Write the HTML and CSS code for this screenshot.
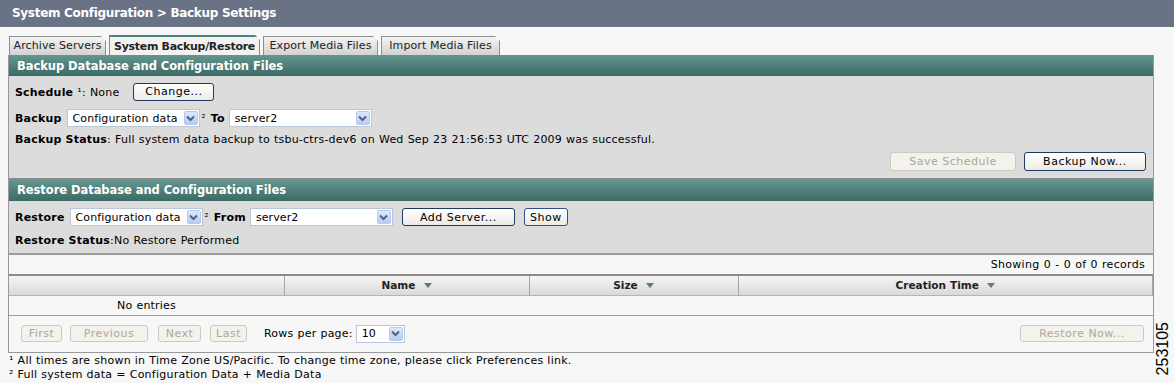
FILE: index.html
```html
<!DOCTYPE html>
<html>
<head>
<meta charset="utf-8">
<link rel="stylesheet" href="styles.css">
</head>
<body>
<header class="titlebar">System Configuration &gt; Backup Settings</header>
<div class="main">
  <div class="content">
    <nav class="tabs">
      <div class="tab t1">Archive Servers</div>
      <div class="tab active t2">System Backup/Restore</div>
      <div class="tab t3">Export Media Files</div>
      <div class="tab t4">Import Media Files</div>
    </nav>
    <section class="panel">
      <h2 class="sect-head">Backup Database and Configuration Files</h2>
      <div class="sect-body backup">
        <div class="row">
          <b>Schedule</b><span class="sup-gap">¹: None</span>
          <button class="btn change">Change...</button>
        </div>
        <div class="row">
          <b>Backup</b>
          <div class="sel sel-type"><span>Configuration data</span><i class="arrow"><svg width="9" height="7" viewBox="0 0 9 7"><path d="M1 1.5 L4.5 5 L8 1.5" fill="none" stroke="#4d6185" stroke-width="2"/></svg></i></div>
          <span class="sup">²</span><b class="lbl-to">To</b>
          <div class="sel sel-server"><span>server2</span><i class="arrow"><svg width="9" height="7" viewBox="0 0 9 7"><path d="M1 1.5 L4.5 5 L8 1.5" fill="none" stroke="#4d6185" stroke-width="2"/></svg></i></div>
        </div>
        <div class="row status"><b>Backup Status</b>: Full system data backup to tsbu-ctrs-dev6 on Wed Sep 23 21:56:53 UTC 2009 was successful.</div>
        <div class="row actions">
          <button class="btn disabled save">Save Schedule</button>
          <button class="btn backupnow">Backup Now...</button>
        </div>
      </div>
      <h2 class="sect-head second">Restore Database and Configuration Files</h2>
      <div class="sect-body restore">
        <div class="row">
          <b>Restore</b>
          <div class="sel sel-type"><span>Configuration data</span><i class="arrow"><svg width="9" height="7" viewBox="0 0 9 7"><path d="M1 1.5 L4.5 5 L8 1.5" fill="none" stroke="#4d6185" stroke-width="2"/></svg></i></div>
          <span class="sup">²</span><b class="lbl-to">From</b>
          <div class="sel sel-server"><span>server2</span><i class="arrow"><svg width="9" height="7" viewBox="0 0 9 7"><path d="M1 1.5 L4.5 5 L8 1.5" fill="none" stroke="#4d6185" stroke-width="2"/></svg></i></div>
          <button class="btn addserver">Add Server...</button>
          <button class="btn show">Show</button>
        </div>
        <div class="row status"><b>Restore Status</b>:No Restore Performed</div>
      </div>
      <div class="records">Showing 0 - 0 of 0 records</div>
      <table class="grid">
        <thead>
          <tr>
            <th class="c0"></th>
            <th class="c1">Name <svg class="tri" width="8" height="5" viewBox="0 0 8 5"><path d="M0 0 H8 L4 5 Z" fill="#5b7c7a"/></svg></th>
            <th class="c2">Size <svg class="tri" width="8" height="5" viewBox="0 0 8 5"><path d="M0 0 H8 L4 5 Z" fill="#5b7c7a"/></svg></th>
            <th class="c3">Creation Time <svg class="tri" width="8" height="5" viewBox="0 0 8 5"><path d="M0 0 H8 L4 5 Z" fill="#5b7c7a"/></svg></th>
          </tr>
        </thead>
        <tbody>
          <tr><td class="empty">No entries</td><td></td><td></td><td></td></tr>
        </tbody>
      </table>
      <div class="pager">
        <button class="btn disabled first">First</button>
        <button class="btn disabled prev">Previous</button>
        <button class="btn disabled next">Next</button>
        <button class="btn disabled last">Last</button>
        <span class="rpp">Rows per page:</span>
        <div class="sel sel-rows"><span>10</span><i class="arrow"><svg width="9" height="7" viewBox="0 0 9 7"><path d="M1 1.5 L4.5 5 L8 1.5" fill="none" stroke="#4d6185" stroke-width="2"/></svg></i></div>
        <button class="btn disabled restorenow">Restore Now...</button>
      </div>
    </section>
    <div class="notes">
      <div>¹ All times are shown in Time Zone US/Pacific. To change time zone, please click Preferences link.</div>
      <div>² Full system data = Configuration Data + Media Data</div>
    </div>
  </div>
  <div class="figno">253105</div>
</div>
</body>
</html>
```
FILE: styles.css
```css
* { box-sizing: border-box; }
html, body { margin: 0; padding: 0; }
body {
  background: #f7f7f7;
  font-family: "DejaVu Sans", Verdana, sans-serif;
  font-size: 11px;
  letter-spacing: 0.2px;
  word-spacing: 0.4px;
  color: #000;
  width: 1174px;
  height: 383px;
  overflow: hidden;
}
.titlebar {
  height: 27px;
  background: #6a7386;
  color: #fff;
  font-weight: bold;
  font-size: 12px;
  line-height: 27px;
  padding-left: 12px;
  letter-spacing: -0.3px;
  word-spacing: 0;
}
.main { display: flex; }
.content { width: 1154px; padding-left: 8px; }
.tabs {
  display: flex;
  gap: 3px;
  padding-left: 1px;
  margin-top: 8px;
  height: 20px;
  align-items: flex-end;
}
.tab {
  height: 19px;
  border: 1px solid #8e8e8e;
  border-bottom: none;
  background: linear-gradient(#f4f4f4, #d2d2d2);
  line-height: 17px;
  text-align: center;
  color: #222;
  font-size: 11px;
  letter-spacing: 0.1px;
  word-spacing: 0;
  clip-path: polygon(0 0, calc(100% - 5px) 0, 100% 5px, 100% 100%, 0 100%);
}
.tab.active {
  background: #f2f2f2;
  border-top: 2px solid #4f827d;
  border-color: #4f827d #888 #888 #888;
  font-weight: bold;
  line-height: 20px;
  height: 20px;
  letter-spacing: -0.3px;
}
.t1 { width: 97px; }
.t2 { width: 151px; }
.t3 { width: 115px; }
.t4 { width: 119px; }

.panel {
  border-left: 1px solid #999;
  border-right: 1px solid #999;
  border-bottom: 1px solid #999;
  background: #f7f7f7;
}
.sect-head {
  margin: 0;
  height: 21px;
  line-height: 22px;
  background: linear-gradient(#64968f, #3c6a64);
  color: #fff;
  font-size: 11.5px;
  font-weight: bold;
  padding-left: 8px;
  letter-spacing: -0.05px;
  word-spacing: 0;
}
.sect-head.second { border-top: 2px solid #8a8a8a; height: 23px; line-height: 21px; }
.sect-body {
  background: #dcdcdc;
  padding: 7px 6px 7px 6px;
  display: flex;
  flex-direction: column;
}
.sect-body .row { display: flex; align-items: center; height: 18px; white-space: pre; }
.sect-body .row + .row { margin-top: 8px; }
.sect-body .row.status { height: 13px; margin-top: 6px; }
.sect-body .row.actions { justify-content: flex-end; height: 19px; margin-top: 6px; padding-right: 1px; }
.backup .row:first-child { padding-top: 1px; }
.restore { padding-bottom: 6px; border-bottom: 2px solid #9a9a9a; }
.restore .row.status { margin-top: 8px; }
b { font-weight: bold; letter-spacing: 0.2px; word-spacing: 0; }
.sup-gap { margin-left: 4px; }
.sup { margin-left: 2px; font-size: 10px; }
.lbl-to { margin-left: 5px; margin-right: 4px; }

.sel {
  display: flex;
  align-items: center;
  height: 18px;
  background: #fff;
  border: 1px solid #b8c8d8;
  margin-left: 5px;
  padding-left: 5px;
}
.sel span { flex: 1; white-space: nowrap; letter-spacing: 0.1px; }
.sel .arrow {
  width: 14px;
  height: 14px;
  margin-right: 1px;
  background: linear-gradient(#dde7fb, #b8cbf1);
  border: 1px solid #b6c8ef;
  border-radius: 2px;
  display: flex;
  align-items: center;
  justify-content: center;
}
.backup .sel-type { width: 133px; margin-left: 5px; }
.backup .sel-server { width: 143px; margin-left: 0; }
.restore .sel-type { width: 133px; }
.restore .sel-server { width: 143px; margin-left: 0; }

.btn {
  font-family: "DejaVu Sans", Verdana, sans-serif;
  font-size: 11px;
  height: 18px;
  padding: 0;
  border: 1px solid #1e3a5f;
  border-radius: 3px;
  background: linear-gradient(#ffffff, #ecebe5);
  color: #000;
  letter-spacing: 0.5px;
}
.btn.disabled {
  border-color: #cdcbbd;
  color: #aca899;
  background: #f3f2ec;
}
.change { width: 81px; margin-left: 14px; margin-top: -2px; }
.save { width: 126px; height: 19px; }
.backupnow { width: 122px; height: 19px; margin-left: 8px; }
.addserver { width: 113px; margin-left: 9px; }
.show { width: 44px; margin-left: 9px; border-color: #2f4f8f; }

.records {
  height: 19px;
  text-align: right;
  padding-right: 8px;
  line-height: 19px;
  background: #f7f7f7;
  letter-spacing: 0.3px;
}
.grid {
  width: 100%;
  border-collapse: collapse;
  table-layout: fixed;
}
.grid th {
  height: 20px;
  border-top: 2px solid #8c8c8c;
  border-bottom: 1px solid #b4b4b4;
  background: linear-gradient(#f5f5f5, #d9d9d9);
  font-weight: bold;
  font-size: 10.5px;
  color: #222;
  padding: 0;
  letter-spacing: 0;
}
.grid th + th { border-left: 1px solid #a4a4a4; }
.grid th.c3 { border-right: 1px solid #a4a4a4; }
.c0 { width: 275px; }
.c1 { width: 245px; }
.c2 { width: 209px; }
.tri { margin-left: 4px; vertical-align: 1px; }
.grid td {
  height: 20px;
  border-bottom: 1px solid #9c9c9c;
  padding: 0;
}
.grid td.empty { text-align: center; }
.pager {
  display: flex;
  align-items: center;
  height: 36px;
  padding-left: 12px;
  padding-right: 9px;
}
.pager .btn { height: 17px; }
.first { width: 41px; }
.prev { width: 78px; margin-left: 8px; }
.next { width: 43px; margin-left: 10px; }
.last { width: 37px; margin-left: 9px; }
.rpp { margin-left: 17px; letter-spacing: 0.2px; }
.sel-rows { width: 49px; margin-left: 3px; }
.restorenow { width: 124px; margin-left: auto; }
.notes { padding-left: 1px; padding-top: 1px; line-height: 14px; letter-spacing: 0.25px; word-spacing: 0.2px; }
.figno {
  font-family: "Liberation Sans", Arial, sans-serif;
  font-size: 16px;
  letter-spacing: 0;
  writing-mode: vertical-rl;
  transform: rotate(180deg);
  align-self: flex-start;
  margin-top: 295px;
  margin-left: 1px;
  line-height: 16px;
}
```
